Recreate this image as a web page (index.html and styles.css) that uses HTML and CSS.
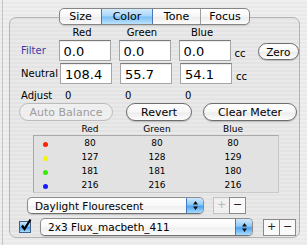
FILE: index.html
```html
<!DOCTYPE html>
<html lang="en">
<head>
    <meta charset="UTF-8">
    <meta name="viewport" content="width=device-width, initial-scale=1.0">
    <title>Color</title>
    <link rel="stylesheet" href="styles.css">
</head>
<body>
    <div class="window">
        <div class="group">
            <div class="tabs">
                <div class="tab tab-size">Size</div>
                <div class="tab tab-color selected">Color</div>
                <div class="tab tab-tone">Tone</div>
                <div class="tab tab-focus">Focus</div>
            </div>

            <div class="row heads">
                <div class="label"></div>
                <div class="colhead">Red</div>
                <div class="colhead">Green</div>
                <div class="colhead">Blue</div>
            </div>

            <div class="row values">
                <div class="label link">Filter</div>
                <input class="field" type="text" value="0.0">
                <input class="field" type="text" value="0.0">
                <input class="field" type="text" value="0.0">
                <span class="unit">cc</span>
                <button class="btn small zero">Zero</button>
            </div>

            <div class="row values neutral">
                <div class="label">Neutral</div>
                <input class="field" type="text" value="108.4">
                <input class="field" type="text" value="55.7">
                <input class="field" type="text" value="54.1">
                <span class="unit">cc</span>
            </div>

            <div class="row adjust">
                <div class="label">Adjust</div>
                <div class="adj">0</div>
                <div class="adj">0</div>
                <div class="adj">0</div>
            </div>

            <div class="row actions">
                <button class="btn auto" disabled>Auto Balance</button>
                <button class="btn revert">Revert</button>
                <button class="btn clear">Clear Meter</button>
            </div>

            <div class="meter-head">
                <div></div>
                <div>Red</div>
                <div>Green</div>
                <div>Blue</div>
            </div>
            <div class="meter">
                <div class="meter-row"><span class="dot" style="background:#ff2200"></span><div>80</div><div>80</div><div>80</div></div>
                <div class="meter-row"><span class="dot" style="background:#f4f400"></span><div>127</div><div>128</div><div>129</div></div>
                <div class="meter-row"><span class="dot" style="background:#33ee00"></span><div>181</div><div>181</div><div>180</div></div>
                <div class="meter-row"><span class="dot" style="background:#1a1aff"></span><div>216</div><div>216</div><div>216</div></div>
            </div>

            <div class="row light">
                <div class="popup light-popup">
                    <span class="popup-text">Daylight Flourescent</span>
                    <span class="popup-arrows">
                        <svg width="7" height="11" viewBox="0 0 7 11"><path d="M3.5 1 L6 4.5 H1 Z M3.5 10 L6 6.5 H1 Z" fill="#111"/></svg>
                    </span>
                </div>
                <div class="pm">
                    <span class="pm-btn disabled">+</span><span class="pm-btn">&minus;</span>
                </div>
            </div>

            <div class="row target">
                <span class="check">
                    <svg width="14" height="15" viewBox="0 0 14 15"><path d="M3 7.5 L5.5 11 L11.5 1.5" fill="none" stroke="#000" stroke-width="2.2"/></svg>
                </span>
                <div class="popup target-popup">
                    <span class="popup-text">2x3 Flux_macbeth_411</span>
                    <span class="popup-arrows">
                        <svg width="7" height="11" viewBox="0 0 7 11"><path d="M3.5 1 L6 4.5 H1 Z M3.5 10 L6 6.5 H1 Z" fill="#111"/></svg>
                    </span>
                </div>
                <div class="pm">
                    <span class="pm-btn">+</span><span class="pm-btn">&minus;</span>
                </div>
            </div>
        </div>
    </div>
</body>
</html>
```

FILE: styles.css
```css
body {
    margin: 0;
    width: 307px;
    height: 245px;
    overflow: hidden;
    font-family: "DejaVu Sans", sans-serif;
    color: #000;
    background: repeating-linear-gradient(#efefef 0 2px, #e9e9e9 2px 4px);
}
.window {
    margin-left: 2px;
    height: 245px;
    border-left: 1px solid #c4c4c4;
    padding: 17px 0 0 6px;
    box-sizing: border-box;
}
.group {
    width: 291px;
    height: 221px;
    box-sizing: border-box;
    border: 1px solid #b3b3b3;
    border-radius: 7px;
    background: rgba(0,0,0,0.025);
}

/* tabs */
.tabs {
    display: flex;
    width: 191px;
    height: 17px;
    margin: -10px auto 0;
    box-sizing: border-box;
    border: 1px solid #858585;
    border-radius: 5px;
    overflow: hidden;
    background: linear-gradient(#ffffff, #f6f6f6 50%, #ebebeb 51%, #fbfbfb);
    box-shadow: 0 1px 1px rgba(0,0,0,0.15);
}
.tab {
    font-size: 11px;
    line-height: 15px;
    text-align: center;
    border-left: 1px solid #9d9d9d;
}
.tab:first-child { border-left: none; }
.tab-size { width: 41px; }
.tab-color { width: 50px; }
.tab-tone { width: 47px; }
.tab-focus { flex: 1; }
.tab.selected {
    border-left-color: #4b79b5;
    border-right: 1px solid #4b79b5;
    background: linear-gradient(#d2eafc, #a9d6fa 48%, #79bdf5 52%, #bde3fd);
}
.tab.selected + .tab { border-left: none; }

/* value rows */
.row {
    display: flex;
    align-items: center;
}
.label {
    width: 39px;
    padding-left: 11px;
    font-size: 10px;
}
.label.link { color: #3b3ba3; }
.heads {
    margin-top: 2px;
    height: 12px;
}
.colhead {
    width: 44px;
    padding-right: 8px;
    margin-right: 8px;
    font-size: 10px;
    line-height: 12px;
    text-align: center;
}
.values {
    margin-top: 1px;
    height: 21px;
}
.neutral { margin-top: 2px; }
.field {
    width: 52px;
    height: 21px;
    box-sizing: border-box;
    margin: 0 8px 0 0;
    padding: 1px 0 0 4px;
    border: 1px solid #a5a5a5;
    border-top-color: #7a7a7a;
    background: #fff;
    font-family: "DejaVu Sans", sans-serif;
    font-size: 13px;
    color: #000;
    box-shadow: inset 0 1px 1px rgba(0,0,0,0.08);
}
.unit {
    align-self: flex-end;
    margin-left: -4px;
    font-size: 10px;
    line-height: 14px;
}
.zero {
    align-self: flex-end;
    margin: 0 0 1px 12px;
}
.adjust {
    margin-top: 5px;
    height: 13px;
    font-size: 10px;
}
.adjust .label { font-size: 10px; }
.adj {
    width: 55px;
    padding-left: 5px;
}

/* push buttons */
.btn {
    height: 18px;
    box-sizing: border-box;
    padding: 0;
    border: 1px solid #6e6e6e;
    border-radius: 9px;
    background: linear-gradient(#ffffff, #f7f7f7 50%, #ececec 55%, #fdfdfd);
    box-shadow: 0 1px 1px rgba(0,0,0,0.2);
    font-family: "DejaVu Sans", sans-serif;
    font-size: 11px;
    color: #000;
}
.btn.small {
    width: 43px;
    height: 17px;
    font-size: 10.5px;
}
.btn:disabled {
    color: #9d9d9d;
    border-color: #bcbcbc;
    background: rgba(255,255,255,0.35);
    box-shadow: none;
}
.actions {
    margin-top: 1px;
    padding-left: 9px;
}
.auto { width: 94px; }
.revert { width: 66px; margin-left: 13px; }
.clear { width: 94px; margin-left: 11px; }

/* meter table */
.meter-head, .meter-row {
    display: grid;
    grid-template-columns: 22px 68px 66px 86px;
    text-align: center;
    font-size: 9px;
}
.meter-head {
    margin: 3px 0 0 24px;
    height: 11px;
    line-height: 11px;
}
.meter {
    width: 246px;
    margin-left: 23px;
    box-sizing: border-box;
    border: 1px solid #a9a9a9;
    border-right-color: #c9c9c9;
    border-bottom-color: #c9c9c9;
    background: #e2e2e2;
}
.meter-row {
    height: 14px;
    line-height: 14px;
}
.dot {
    width: 5px;
    height: 5px;
    border-radius: 50%;
    margin: 6px auto 0;
}

/* popups */
.light {
    margin-top: 4px;
    height: 17px;
    padding-left: 17px;
}
.target {
    margin-top: 4px;
    height: 18px;
    padding-left: 9px;
}
.popup {
    display: flex;
    align-items: center;
    box-sizing: border-box;
    border: 1px solid #8c8c8c;
    border-bottom-color: #6f6f6f;
    border-radius: 5px;
    background: linear-gradient(#ffffff, #f8f8f8 50%, #efefef 55%, #fcfcfc);
    box-shadow: 0 1px 1px rgba(0,0,0,0.15);
    overflow: hidden;
}
.light-popup { width: 177px; height: 17px; }
.target-popup { width: 213px; height: 18px; margin-left: 9px; }
.popup-text {
    flex: 1;
    padding-left: 7px;
    font-size: 10.5px;
}
.popup-arrows {
    width: 16px;
    align-self: stretch;
    display: flex;
    align-items: center;
    justify-content: center;
    border-left: 1px solid #3f7cc4;
    background: linear-gradient(#cfe7fc, #8fc9f7 45%, #4fa3ee 55%, #a6dcfd);
}
.popup-arrows svg { display: block; }
.pm {
    display: flex;
    margin-left: 9px;
}
.target .pm { margin-left: 10px; }
.pm-btn {
    width: 17px;
    height: 17px;
    box-sizing: border-box;
    border: 1px solid #8a8a8a;
    background: #f9f9f9;
    font-size: 11px;
    line-height: 14px;
    text-align: center;
    color: #222;
}
.pm-btn + .pm-btn { margin-left: -1px; }
.pm-btn.disabled {
    color: #b8b8b8;
    border-color: #c2c2c2;
    background: rgba(255,255,255,0.4);
}
.check {
    width: 12px;
    height: 12px;
    position: relative;
    box-sizing: border-box;
    border: 1px solid #3f5f8f;
    background: linear-gradient(#cde6fb, #7fbdf2 50%, #4d9de9 55%, #a9dcfd);
}
.check svg {
    position: absolute;
    left: -1px;
    top: -4px;
}
```
